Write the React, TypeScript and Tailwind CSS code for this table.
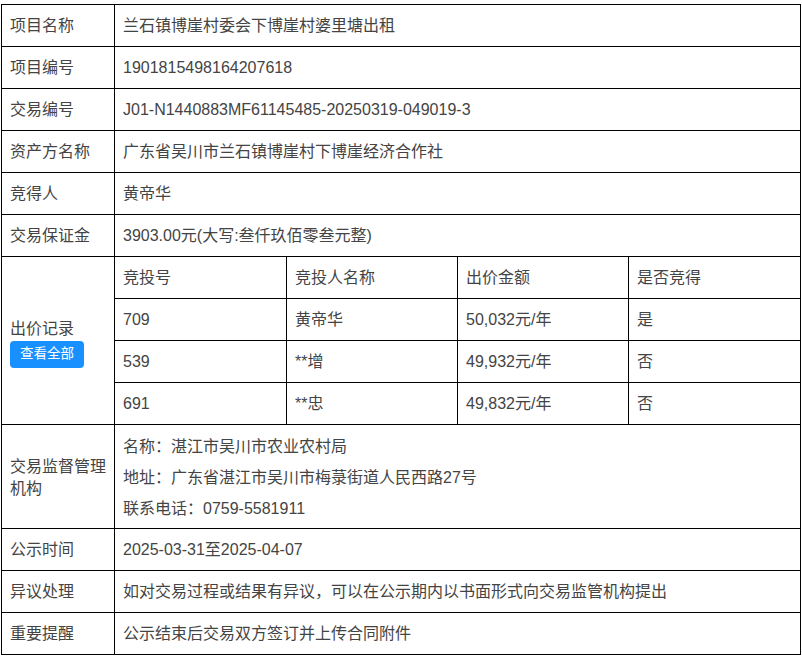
import React from "react";

const rows1: [string, string][] = [
  ["项目名称", "兰石镇博崖村委会下博崖村婆里塘出租"],
  ["项目编号", "1901815498164207618"],
  ["交易编号", "J01-N1440883MF61145485-20250319-049019-3"],
  ["资产方名称", "广东省吴川市兰石镇博崖村下博崖经济合作社"],
  ["竞得人", "黄帝华"],
  ["交易保证金", "3903.00元(大写:叁仟玖佰零叁元整)"],
];

const bids = [
  ["709", "黄帝华", "50,032元/年", "是"],
  ["539", "**增", "49,932元/年", "否"],
  ["691", "**忠", "49,832元/年", "否"],
];

const base = "border border-black px-[8px] align-middle";
const td = base + " h-[42px] pt-[1px] pb-0";

export default function App() {
  return (
    <div
      className="bg-white w-[802px] h-[657px] pt-[4px] pl-[1px] text-[16px] text-[#444]"
      style={{ fontFamily: '"Liberation Sans", Arial, "Noto Sans CJK SC", sans-serif' }}
    >
      <table className="border-collapse table-fixed w-[799px]">
        <colgroup>
          <col className="w-[113px]" />
          <col className="w-[172px]" />
          <col className="w-[171px]" />
          <col className="w-[171px]" />
          <col className="w-[172px]" />
        </colgroup>
        <tbody>
          {rows1.map(([k, v]) => (
            <tr key={k}>
              <td className={td}>{k}</td>
              <td className={td} colSpan={4}>
                {v}
              </td>
            </tr>
          ))}
          <tr>
            <td className={base + " pt-[4px] pb-0"} rowSpan={4}>
              <div className="leading-[22px]">出价记录</div>
              <div className="mt-[1px] inline-flex items-center justify-center h-[27px] px-[10px] rounded-[4px] bg-[#1890ff] text-white text-[13.5px]">
                查看全部
              </div>
            </td>
            <td className={td}>竞投号</td>
            <td className={td}>竞投人名称</td>
            <td className={td}>出价金额</td>
            <td className={td}>是否竞得</td>
          </tr>
          {bids.map((b) => (
            <tr key={b[0]}>
              {b.map((c, i) => (
                <td key={i} className={td}>
                  {c}
                </td>
              ))}
            </tr>
          ))}
          <tr>
            <td className={base + " leading-[22px] pt-[2px] pb-0"}>交易监督管理机构</td>
            <td className={base + " pt-[6px] pb-[4px]"} colSpan={4}>
              <div className="leading-[31px]">名称：湛江市吴川市农业农村局</div>
              <div className="leading-[31px]">地址：广东省湛江市吴川市梅菉街道人民西路27号</div>
              <div className="leading-[31px]">联系电话：0759-5581911</div>
            </td>
          </tr>
          <tr>
            <td className={td}>公示时间</td>
            <td className={td} colSpan={4}>
              2025-03-31至2025-04-07
            </td>
          </tr>
          <tr>
            <td className={td}>异议处理</td>
            <td className={td} colSpan={4}>
              如对交易过程或结果有异议，可以在公示期内以书面形式向交易监管机构提出
            </td>
          </tr>
          <tr>
            <td className={td}>重要提醒</td>
            <td className={td} colSpan={4}>
              公示结束后交易双方签订并上传合同附件
            </td>
          </tr>
        </tbody>
      </table>
    </div>
  );
}
